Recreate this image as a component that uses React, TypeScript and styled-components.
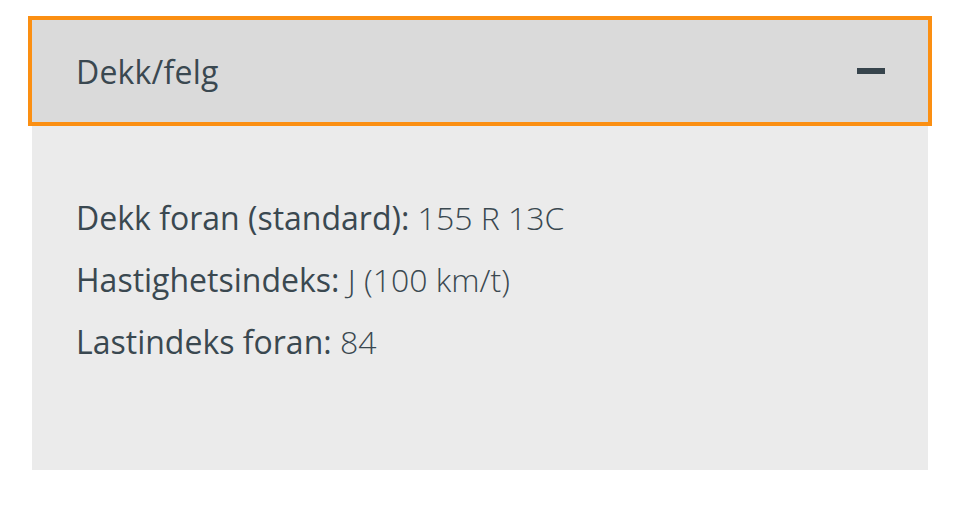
import styled, { createGlobalStyle } from 'styled-components';

const GlobalStyle = createGlobalStyle`
    html, body {
        margin: 0;
        padding: 0;
        background: #ffffff;
    }
    body {
        font-family: "Open Sans", Lato, sans-serif;
        color: #3a4850;
    }
`;

const Page = styled.div`
    padding: 20px 32px;
`;

const Accordion = styled.section`
    background: #ebebeb;
`;

const Header = styled.button`
    display: flex;
    align-items: center;
    justify-content: space-between;
    width: 100%;
    height: 102px;
    padding: 0 43px 0 44px;
    border: none;
    background: #dadada;
    outline: 4px solid #fb8f12;
    font: inherit;
    color: inherit;
    cursor: pointer;
`;

const Title = styled.span`
    font-size: 32px;
    font-weight: 400;
    letter-spacing: 0.2px;
`;

const Minus = styled.span`
    display: block;
    width: 28px;
    height: 6px;
    background: #37444c;
`;

const Body = styled.div`
    display: flex;
    flex-direction: column;
    gap: 18px;
    padding: 74px 44px 106px;
`;

const Spec = styled.p`
    margin: 0;
    font-size: 32px;
    line-height: 44px;
`;

const Label = styled.span`
    font-weight: 500;
`;

const Value = styled.span`
    font-weight: 300;
`;

const specs = [
    { label: 'Dekk foran (standard):', value: '155 R 13C' },
    { label: 'Hastighetsindeks:', value: 'J (100 km/t)' },
    { label: 'Lastindeks foran:', value: '84' },
];

export default function App() {
    return (
        <Page>
            <GlobalStyle />
            <Accordion>
                <Header>
                    <Title>Dekk/felg</Title>
                    <Minus />
                </Header>
                <Body>
                    {specs.map((s) => (
                        <Spec key={s.label}>
                            <Label>{s.label}</Label> <Value>{s.value}</Value>
                        </Spec>
                    ))}
                </Body>
            </Accordion>
        </Page>
    );
}
